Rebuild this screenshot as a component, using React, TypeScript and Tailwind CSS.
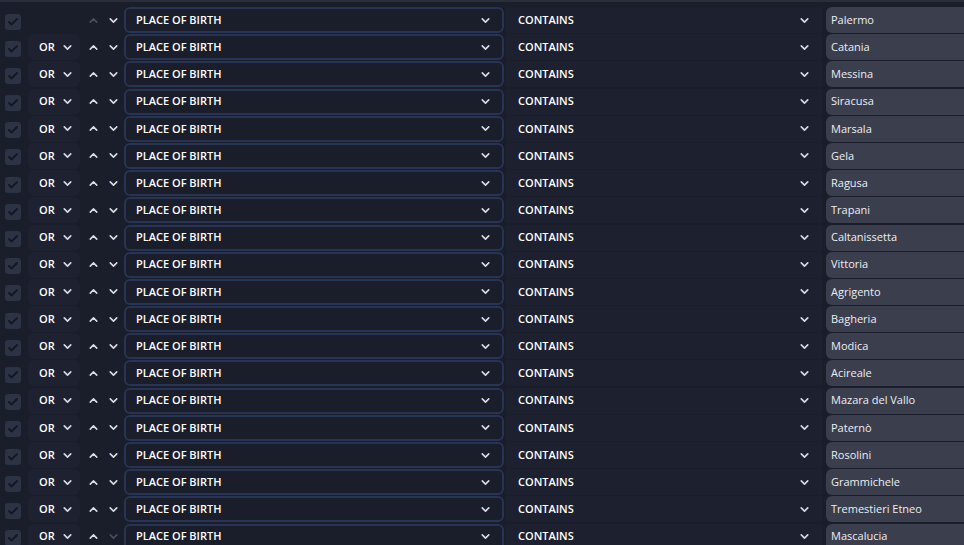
import { ChevronDown, ChevronUp, Check } from 'lucide-react';

const cities = [
  'Palermo',
  'Catania',
  'Messina',
  'Siracusa',
  'Marsala',
  'Gela',
  'Ragusa',
  'Trapani',
  'Caltanissetta',
  'Vittoria',
  'Agrigento',
  'Bagheria',
  'Modica',
  'Acireale',
  'Mazara del Vallo',
  'Paternò',
  'Rosolini',
  'Grammichele',
  'Tremestieri Etneo',
  'Mascalucia',
];

function Row({ city, first, last }: { city: string; first: boolean; last: boolean }) {
  return (
    <div className="flex h-[26px] shrink-0 items-center">
      <div className="flex w-[28px] items-center pl-[5px] pt-[3px]">
        <div className="flex h-[16px] w-[16px] items-center justify-center rounded-[3px] bg-[#2c3345]">
          <Check size={12} strokeWidth={4} className="text-[#151823]" />
        </div>
      </div>
      <div className="flex h-[26px] w-[52px] items-center rounded-md">
        {!first && (
          <div className="flex h-full w-full items-center rounded-md bg-[#1e2130] pl-[11px] text-[11px] font-semibold text-white">
            <span>OR</span>
            <ChevronDown size={13} strokeWidth={3} className="ml-[6px] text-[#d8dbe4]" />
          </div>
        )}
      </div>
      <div className="flex w-[44px] items-center pl-[7px]">
        <ChevronUp size={13} strokeWidth={3} className={first ? 'text-[#4a4f5e]' : 'text-[#d8dbe4]'} />
        <ChevronDown size={13} strokeWidth={3} className={`ml-[7px] ${last ? 'text-[#4a4f5e]' : 'text-[#d8dbe4]'}`} />
      </div>
      <div className="flex h-[26px] w-[380px] items-center justify-between rounded-md border-2 border-[#283453] pl-[10px] pr-[10px] text-[11px] font-semibold text-white">
        <span>PLACE OF BIRTH</span>
        <ChevronDown size={13} strokeWidth={3} className="text-[#d8dbe4]" />
      </div>
      <div className="ml-[2px] flex h-[26px] w-[316px] items-center justify-between bg-[#1d202e] pl-[12px] pr-[11px] text-[11px] font-semibold text-white">
        <span>CONTAINS</span>
        <ChevronDown size={13} strokeWidth={3} className="text-[#d8dbe4]" />
      </div>
      <div className="ml-[4px] flex h-[26px] flex-1 items-center rounded-l-md bg-[#3b3e4d] pl-[5px] text-[11px] text-[#eceef2]">
        {city}
      </div>
    </div>
  );
}

export default function App() {
  return (
    <div
      className="h-[545px] w-[964px] overflow-hidden border-t-2 border-[#2a2e3a] bg-[#1a1d2a]"
      style={{ fontFamily: '"Open Sans", "Noto Sans", sans-serif' }}
    >
      <div className="flex flex-col gap-[1.2px] pt-[5px]">
        {cities.map((c, i) => (
          <Row key={c} city={c} first={i === 0} last={i === cities.length - 1} />
        ))}
      </div>
    </div>
  );
}
